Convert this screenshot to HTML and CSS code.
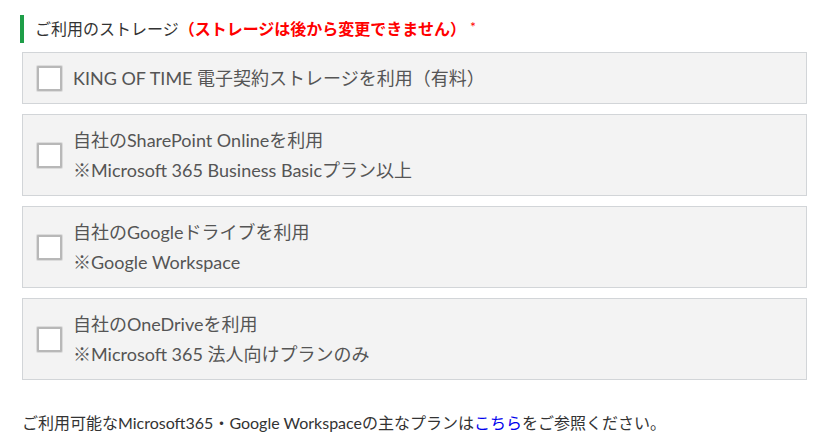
FILE: index.html
```html
<!DOCTYPE html>
<html lang="ja">
<head>
    <meta charset="UTF-8">
    <meta name="viewport" content="width=device-width, initial-scale=1.0">
    <title>ご利用のストレージ</title>
    <link rel="stylesheet" href="styles.css">
</head>
<body>
    <section class="storage">
        <h2 class="storage-title">
            ご利用のストレージ<span class="notice">（ストレージは後から変更できません）</span><span class="required">*</span>
        </h2>

        <div class="options">
            <label class="option">
                <input type="checkbox" class="option-check">
                <span class="option-text">
                    <span class="option-name">KING OF TIME 電子契約ストレージを利用（有料）</span>
                </span>
            </label>

            <label class="option">
                <input type="checkbox" class="option-check">
                <span class="option-text">
                    <span class="option-name">自社のSharePoint Onlineを利用</span>
                    <span class="option-note">※Microsoft 365 Business Basicプラン以上</span>
                </span>
            </label>

            <label class="option">
                <input type="checkbox" class="option-check">
                <span class="option-text">
                    <span class="option-name">自社のGoogleドライブを利用</span>
                    <span class="option-note">※Google Workspace</span>
                </span>
            </label>

            <label class="option">
                <input type="checkbox" class="option-check">
                <span class="option-text">
                    <span class="option-name">自社のOneDriveを利用</span>
                    <span class="option-note">※Microsoft 365 法人向けプランのみ</span>
                </span>
            </label>
        </div>

        <p class="plans">ご利用可能なMicrosoft365・Google Workspaceの主なプランは<a href="#" class="plans-link">こちら</a>をご参照ください。</p>
    </section>
</body>
</html>
```

FILE: styles.css
```css
body {
    margin: 0;
    padding: 0;
    background-color: #fff;
    font-family: Lato, "Noto Sans CJK JP", sans-serif;
    color: #333;
}

.storage {
    padding: 15px 14px 0 20px;
}

.storage-title {
    margin: 0;
    padding-left: 11px;
    border-left: 4px solid #1e9e48;
    font-size: 16px;
    font-weight: normal;
    line-height: 28px;
    height: 28px;
    color: #333;
}

.notice {
    color: #ff0000;
    font-weight: bold;
}

.required {
    color: #ff0000;
    font-size: 14px;
    line-height: 1;
    vertical-align: 3px;
    margin-left: 4px;
}

.options {
    margin: 9px 0 0 2px;
    display: flex;
    flex-direction: column;
    gap: 10px;
}

.option {
    display: flex;
    align-items: center;
    padding: 10px 14px;
    background-color: #f3f3f3;
    border: 1px solid #d2d5d8;
    cursor: pointer;
}

.option-check {
    appearance: none;
    -webkit-appearance: none;
    margin: 0 11px 0 0;
    width: 25px;
    height: 25px;
    flex-shrink: 0;
    background-color: #fff;
    border: 2px solid #b8b8b8;
    box-shadow: 0 0 0 1px #dcdcdc;
    border-radius: 1px;
}

.option-text {
    display: flex;
    flex-direction: column;
    font-size: 18px;
    line-height: 30px;
    color: #555;
}

.plans {
    margin: 31px 0 0 2px;
    font-size: 16px;
    line-height: 24px;
    color: #333;
}

.plans-link {
    color: #0000ee;
    text-decoration: none;
}
```
